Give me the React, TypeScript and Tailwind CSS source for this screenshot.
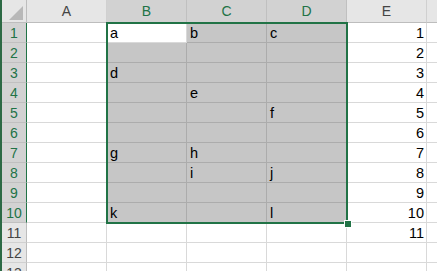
import React from 'react';

const cols = ['A', 'B', 'C', 'D', 'E', 'F'];
const rows = [1, 2, 3, 4, 5, 6, 7, 8, 9, 10, 11, 12, 13];

// cell text by "col+row"
const data: Record<string, string> = {
    B1: 'a', C1: 'b', D1: 'c',
    B3: 'd',
    C4: 'e',
    D5: 'f',
    B7: 'g', C7: 'h',
    C8: 'i', D8: 'j',
    B10: 'k', D10: 'l',
};

const isSelCol = (c: string) => c === 'B' || c === 'C' || c === 'D';
const isSelRow = (r: number) => r <= 10;

function Cell({ col, row }: { col: string; row: number }) {
    const sel = isSelCol(col) && isSelRow(row) && !(col === 'B' && row === 1);
    const key = col + row;
    let text = data[key] ?? '';
    if (col === 'E' && row <= 11) text = String(row);
    return (
        <div
            className={`h-[20px] border-r border-b px-[3px] text-[14.5px] leading-[20px] overflow-hidden whitespace-nowrap ${
                col === 'E' ? 'text-right pr-[2px]' : 'text-left'
            } ${sel ? 'bg-[#c6c6c6] border-[#acacac]' : 'bg-white border-[#d9d9d9]'}`}
        >
            {text}
        </div>
    );
}

export default function App() {
    return (
        <div className="relative w-[437px] h-[271px] overflow-hidden bg-white text-black" style={{ fontFamily: '"Liberation Sans", Arial, sans-serif' }}>
            <div className="flex h-full">
                <div className="w-[2px] shrink-0 bg-[#2d6a45]" />
                <div className="grid grid-cols-[25px_80px_80px_80px_80px_80px_80px] grid-rows-[23px] auto-rows-[20px] content-start">
                    {/* corner */}
                    <div className="relative h-[23px] bg-[#e6e6e6] border-r border-b border-[#bdbdbd]">
                        <svg className="absolute right-[3px] bottom-[2px]" width="14" height="14" viewBox="0 0 14 14">
                            <polygon points="14,0 14,14 0,14" fill="#b8b8b8" />
                        </svg>
                    </div>
                    {cols.map((c) => (
                        <div
                            key={c}
                            className={`h-[23px] border-r border-b text-center text-[14px] leading-[23px] ${
                                isSelCol(c)
                                    ? 'bg-[#d2d2d2] text-[#217346] border-r-[#c0c0c0] border-b-[#217346]'
                                    : 'bg-[#e6e6e6] text-[#444] border-r-[#d0d0d0] border-b-[#bdbdbd]'
                            }`}
                        >
                            {c}
                        </div>
                    ))}
                    {rows.map((r) => (
                        <React.Fragment key={r}>
                            <div
                                className={`h-[20px] border-r border-b text-center text-[14px] leading-[20px] ${
                                    isSelRow(r)
                                        ? 'bg-[#d2d2d2] text-[#217346] border-r-[#217346] border-b-[#c0c0c0]'
                                        : 'bg-[#e6e6e6] text-[#444] border-r-[#bdbdbd] border-b-[#d0d0d0]'
                                }`}
                            >
                                {r}
                            </div>
                            {cols.map((c) => (
                                <Cell key={c} col={c} row={r} />
                            ))}
                        </React.Fragment>
                    ))}
                </div>
            </div>
            {/* selection outline B1:D10 */}
            <div className="absolute left-[106px] top-[22px] w-[242px] h-[202px] border-2 border-[#217346] pointer-events-none" />
            <div className="absolute left-[344px] top-[220px] w-[6px] h-[6px] bg-[#217346] border border-white box-content" />
        </div>
    );
}
